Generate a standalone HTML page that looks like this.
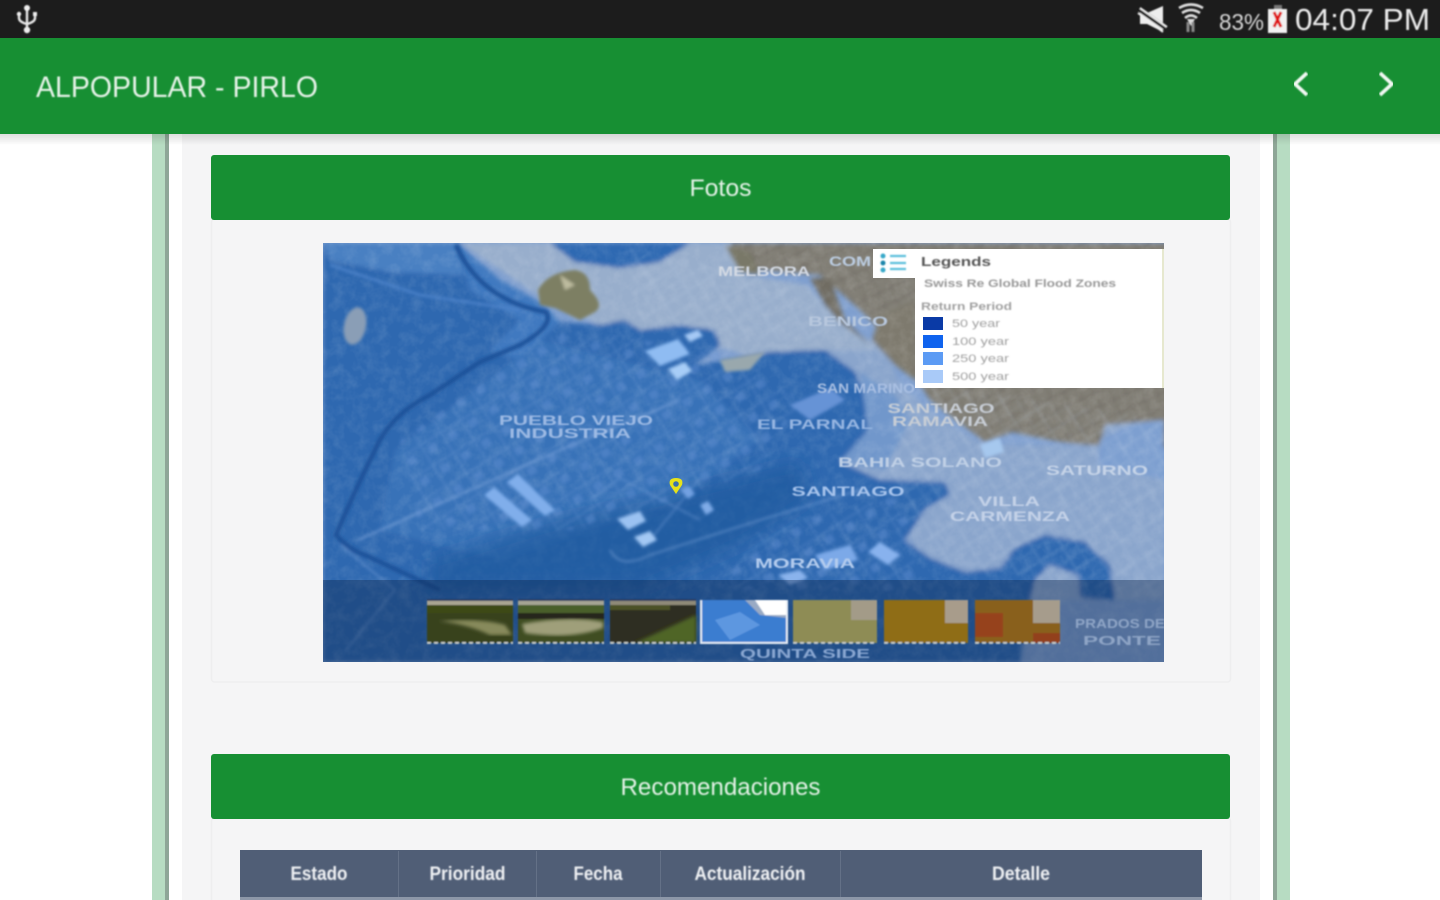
<!DOCTYPE html>
<html lang="es"><head><meta charset="utf-8"><title>ALPOPULAR - PIRLO</title>
<style>
html,body{margin:0;padding:0;width:1440px;height:900px;overflow:hidden;background:#fff}
svg{display:block}
text{font-family:"Liberation Sans",sans-serif}
</style></head><body>
<svg width="1440" height="900" viewBox="0 0 1440 900" xmlns="http://www.w3.org/2000/svg">
<defs>
<filter id="b05" x="-5%" y="-30%" width="110%" height="160%"><feGaussianBlur stdDeviation="0.7"/></filter>
<filter id="b08" x="-5%" y="-5%" width="110%" height="110%"><feGaussianBlur stdDeviation="0.9"/></filter>
<filter id="b1" x="-5%" y="-5%" width="110%" height="110%"><feGaussianBlur stdDeviation="1.6"/></filter>
<filter id="b3" x="-5%" y="-5%" width="110%" height="110%"><feGaussianBlur stdDeviation="2.5"/></filter>
<filter id="b6" x="-20%" y="-20%" width="140%" height="140%"><feGaussianBlur stdDeviation="9"/></filter>
<filter id="noise" x="0" y="0" width="100%" height="100%"><feTurbulence type="fractalNoise" baseFrequency="0.09" numOctaves="3" seed="4"/><feColorMatrix values="0 0 0 0 1  0 0 0 0 1  0 0 0 0 1  1.6 0 0 0 -0.62"/></filter>
<linearGradient id="sh" x1="0" y1="0" x2="0" y2="1"><stop offset="0" stop-color="#000" stop-opacity=".13"/><stop offset="1" stop-color="#000" stop-opacity="0"/></linearGradient>
<clipPath id="mapclip"><rect x="323" y="243" width="841" height="419"/></clipPath>
<pattern id="streets" width="26" height="26" patternUnits="userSpaceOnUse" patternTransform="rotate(-32)"><path d="M0 0H26M0 13H26M0 0V26M13 0V26" stroke="#c4d4ea" stroke-opacity=".24" stroke-width="1.6"/></pattern>
<pattern id="streetsd" width="24" height="24" patternUnits="userSpaceOnUse" patternTransform="rotate(-32)"><path d="M0 0H24M0 0V24" stroke="#86aade" stroke-opacity=".42" stroke-width="2"/><rect x="5" y="5" width="9" height="8" fill="#6b97d6" fill-opacity=".4"/></pattern>
<pattern id="sat" width="14" height="14" patternUnits="userSpaceOnUse" patternTransform="rotate(-25)"><rect width="14" height="14" fill="#86837a"/><path d="M0 0H14M0 7H14M0 0V14" stroke="#625f57" stroke-width="1.6"/></pattern>
</defs>

<!-- page frame -->
<rect width="1440" height="900" fill="#fff"/>
<rect x="152" y="134" width="13" height="766" fill="#b7dcc2"/>
<rect x="165" y="134" width="4" height="766" fill="#8ea697"/>
<rect x="1273" y="134" width="4" height="766" fill="#8ea697"/>
<rect x="1277" y="134" width="13" height="766" fill="#b7dcc2"/>
<rect x="182" y="134" width="1078" height="766" fill="#f5f5f6"/>

<!-- status bar -->
<rect width="1440" height="38" fill="#1c1c1c"/>
<g filter="url(#b05)">
<path d="M27 7V31M19 14V18Q19 22 27 24Q35 22 35 18V14" fill="none" stroke="#e8e8e8" stroke-width="2.4"/>
<circle cx="27" cy="8" r="3" fill="#eee"/><circle cx="27" cy="30" r="3.2" fill="#eee"/><circle cx="19" cy="14" r="2.2" fill="#eee"/><rect x="33" y="12" width="4" height="4" fill="#eee"/>
<path d="M1140 13H1147L1163 6V32L1147 24H1140Z" fill="#eee"/>
<path d="M1139 9L1166 28" stroke="#1c1c1c" stroke-width="5"/><path d="M1140 8L1167 27M1138 13L1163 32" stroke="#eee" stroke-width="2"/>
<path d="M1179 8Q1191 1 1203 8M1182 13Q1191 7 1200 13M1185 18Q1191 13 1197 18" fill="none" stroke="#ddd" stroke-width="2.6"/>
<path d="M1191 26L1187 19H1195Z" fill="#ddd"/>
<path d="M1188 22V32M1193 22V32" stroke="#888" stroke-width="3" fill="none"/>
<text x="1219" y="30" font-size="23" fill="#d8d8d8" textLength="45" lengthAdjust="spacingAndGlyphs">83%</text>
<rect x="1274" y="5" width="8" height="4" fill="#777"/>
<rect x="1268" y="9" width="19" height="24" fill="#f2f2f2"/>
<path d="M1274 12L1281 27M1281 12L1274 27" stroke="#e01818" stroke-width="3"/>
<text x="1295" y="30" font-size="31" fill="#ececec" textLength="135" lengthAdjust="spacingAndGlyphs">04:07 PM</text>
</g>

<!-- toolbar -->
<rect y="134" width="1440" height="11" fill="url(#sh)"/>
<rect y="38" width="1440" height="96" fill="#178f33"/>
<g filter="url(#b05)">
<text x="36" y="97" font-size="30" fill="#e6f3e8" textLength="282" lengthAdjust="spacingAndGlyphs">ALPOPULAR - PIRLO</text>
</g>
<path d="M1307 73L1295 84L1307 95" fill="none" stroke="#f2f8f3" stroke-width="3.6" filter="url(#b05)"/>
<path d="M1380 73L1392 84L1380 95" fill="none" stroke="#f2f8f3" stroke-width="3.6" filter="url(#b05)"/>

<!-- Fotos -->
<rect x="211.500" y="219" width="1019" height="463" rx="3" fill="#f5f5f6" stroke="#eeeeef" stroke-width="1.500"/>
<rect x="211" y="155" width="1019" height="65" rx="3" fill="#178f33"/>
<text x="720.500" y="196" font-size="24" fill="#e4f2e7" text-anchor="middle" textLength="62" lengthAdjust="spacingAndGlyphs" filter="url(#b05)">Fotos</text>

<!-- MAP -->
<g clip-path="url(#mapclip)">
<rect x="323" y="243" width="841" height="419" fill="#7f9fcf"/>
<g filter="url(#b3)">
<!-- satellite, top right -->
<path d="M720 243H1170V450L1110 425L1100 445L1060 442L1010 430L985 440L930 400L895 345L860 310L820 275L760 270Z" fill="url(#sat)"/>
<path d="M915 380H1170V420L1130 425L1098 446L1060 442L1012 432L985 442L945 412Z" fill="url(#sat)"/>
<!-- pale flood layer over top of satellite -->
<path d="M600 243H730L745 275L810 285L830 320L885 345L900 385L935 415L985 445L1035 445L1100 445L1105 425L1164 420V600H860L830 470L860 380L790 340L700 330Z" fill="#8aa5cc"/>
<path d="M460 243H730L745 275L805 285L840 320L880 350L820 350L760 362L730 350L640 330L600 325L545 300Z" fill="#98aecc"/>
<path d="M810 278L830 278L845 320L870 345L840 322L825 305Z" fill="#6f6c62"/>
<path d="M725 245L750 252L760 275L740 272Z" fill="#797868"/>
<path d="M880 315L915 300V380L895 365L872 340Z" fill="#7e7a6e"/>
<!-- main flood layer -->
<path d="M323 243H458L500 280L545 305L560 322L600 325L625 320L640 330L680 325L715 330L720 345L695 365L770 352L825 350L855 372L870 405L868 430L840 462L880 480L945 482L950 495L925 510L905 540L930 558L965 572L1000 568L1015 548L1045 535L1085 542L1110 565L1115 600L1080 598L1078 575L1050 565L1035 580L1030 600L1020 662H323Z" fill="#2e68b0"/>
<path d="M550 243H690L660 262L620 268L575 262Z" fill="#2f69b2"/>
<path d="M1164 420L1130 425L1100 440L1098 465L1164 480Z" fill="#7d9fd0"/>
<path d="M860 372L895 395L910 420L885 470L840 462L868 430Z" fill="#7197cb"/>
<!-- medium band alongside river and mid city tint -->
<path d="M458 243L500 280L545 305L560 322L520 360L490 350L520 320L470 290Z" fill="#3f79c0"/>
<path d="M323 243H455L465 275L390 272L330 260Z" fill="#4a80c2"/>
<path d="M395 450L540 340L700 380L760 440L680 500L500 560L380 530Z" fill="#3d76bb" opacity=".75"/>
</g>
<rect x="323" y="243" width="841" height="419" filter="url(#noise)" opacity=".13"/>
<!-- soft dark swath -->
<path d="M430 560L560 520L650 500L800 462L810 500L740 545L640 590H430Z" fill="#1e589c" opacity=".65" filter="url(#b6)"/>
<g filter="url(#b1)">
<!-- street textures -->
<path d="M400 440L560 330L720 350L800 400L760 470L580 530L420 530Z" fill="url(#streetsd)"/>
<path d="M760 530L905 495L920 590H720Z" fill="url(#streetsd)"/>
<path d="M900 380L1164 420V600L930 560L890 470Z" fill="url(#streets)"/>
<path d="M620 245L830 290L900 400L850 340L740 340L640 320Z" fill="url(#streets)"/>
<!-- dark river -->
<path d="M456 245Q480 300 546 312Q555 325 520 345L480 362L430 395Q390 415 375 450Q355 490 336 535Q350 550 365 555L440 590" fill="none" stroke="#1c5199" stroke-width="4.500"/>
<path d="M358 540L560 450L680 400" fill="none" stroke="#84a8dc" stroke-opacity=".55" stroke-width="2.500"/>
<path d="M650 540L700 478M590 500L620 478L700 520" fill="none" stroke="#7ba3dc" stroke-opacity=".4" stroke-width="2"/>
<path d="M330 265L420 295L520 310" fill="none" stroke="#5288cf" stroke-width="2"/>
<path d="M346 650L395 590L340 545" fill="none" stroke="#6c97d2" stroke-opacity=".6" stroke-width="2"/>
<path d="M610 550Q620 570 650 555L760 520L860 490" fill="none" stroke="#80a5da" stroke-opacity=".5" stroke-width="2"/>
<!-- hills -->
<path d="M538 290Q548 272 575 270Q590 272 590 290Q605 305 595 312L580 320L555 308L540 305Z" fill="#7d7f63"/>
<path d="M560 275L575 285L565 290Z" fill="#bdbb9f"/>
<ellipse cx="355" cy="326" rx="11" ry="19" transform="rotate(12 355 326)" fill="#8a9eb6"/>
<!-- light buildings -->
<path d="M645 351L678 339L690 354L660 366Z" fill="#8fbcf2"/>
<path d="M668 369L685 362L692 371L677 380Z" fill="#a7cdf7"/>
<path d="M684 335L698 330L703 336L690 342Z" fill="#a5c9f5"/>
<path d="M484 495L494 487L532 520L522 527Z" fill="#80aeeb"/>
<path d="M507 482L518 474L555 510L545 516Z" fill="#80aeeb"/>
<path d="M617 519L640 511L646 521L628 530Z" fill="#9bc2f2"/>
<path d="M634 537L650 531L657 540L643 547Z" fill="#a3c8f4"/>
<path d="M681 490L689 486L695 494L688 499Z" fill="#72a1e2"/>
<path d="M700 505L708 501L714 510L706 515Z" fill="#80ace8"/>
<path d="M815 555L850 545L858 560L825 570Z" fill="#7ba9e8"/>
<path d="M868 552L880 542L900 555L888 565Z" fill="#88b2ee"/>
<path d="M778 575L800 570L808 578L790 585Z" fill="#8ab3ec"/>
<path d="M980 445L1000 438L1004 452L985 458Z" fill="#a6c8ee"/>
<path d="M790 405L830 388L845 400L810 420Z" fill="#6693d6"/>
<path d="M720 360L765 352L750 370L725 372Z" fill="#99a8ad"/>
</g>
<!-- labels -->
<g filter="url(#b08)" font-size="14" font-weight="700" fill="#c9d8ee" text-anchor="middle">
<text x="576" y="425" fill="#9dbae4" textLength="154" lengthAdjust="spacingAndGlyphs">PUEBLO VIEJO</text>
<text x="570" y="438" fill="#9dbae4" textLength="122" lengthAdjust="spacingAndGlyphs">INDUSTRIA</text>
<text x="815" y="429" fill="#97b6e2" textLength="116" lengthAdjust="spacingAndGlyphs">EL PARNAL</text>
<text x="920" y="467" fill="#c0d0e6" textLength="164" lengthAdjust="spacingAndGlyphs">BAHIA SOLANO</text>
<text x="848" y="496" fill="#a8c4ec" textLength="113" lengthAdjust="spacingAndGlyphs">SANTIAGO</text>
<text x="1097" y="475" fill="#c6d4e8" textLength="102" lengthAdjust="spacingAndGlyphs">SATURNO</text>
<text x="1009" y="506" fill="#c4d2e8" textLength="62" lengthAdjust="spacingAndGlyphs">VILLA</text>
<text x="1010" y="521" fill="#c4d2e8" textLength="120" lengthAdjust="spacingAndGlyphs">CARMENZA</text>
<text x="805" y="568" fill="#b4ccee" textLength="100" lengthAdjust="spacingAndGlyphs">MORAVIA</text>
<text x="848" y="326" fill="#b8c8de" textLength="80" lengthAdjust="spacingAndGlyphs">BENICO</text>
<text x="866" y="393" fill="#a9bfe2" textLength="98" lengthAdjust="spacingAndGlyphs">SAN MARINO</text>
<text x="941" y="413" fill="#c8ced6" textLength="107" lengthAdjust="spacingAndGlyphs">SANTIAGO</text>
<text x="940" y="426" fill="#c8ced6" textLength="96" lengthAdjust="spacingAndGlyphs">RAMAVIA</text>
<text x="764" y="276" fill="#d4dae4" textLength="92" lengthAdjust="spacingAndGlyphs">MELBORA</text>
<text x="850" y="266" fill="#bccde2" textLength="42" lengthAdjust="spacingAndGlyphs">COM</text>
</g>
<!-- pin -->
<path d="M676 494L670 485Q668 478 676 478Q684 478 682 485Z" fill="#e6e21a"/>
<circle cx="676" cy="484" r="2.800" fill="#3a70b0"/>
<!-- strip -->
<rect x="323" y="580" width="841" height="82" fill="#0b2148" fill-opacity=".38"/>
<g filter="url(#b08)" font-size="13" font-weight="700" text-anchor="middle">
<text x="805" y="658" fill="#8aa7d2" textLength="130" lengthAdjust="spacingAndGlyphs">QUINTA SIDE</text>
<text x="1120" y="628" fill="#8fa5c6" textLength="90" lengthAdjust="spacingAndGlyphs">PRADOS DE</text>
<text x="1122" y="645" fill="#8fa5c6" textLength="78" lengthAdjust="spacingAndGlyphs">PONTE</text>
</g>
<!-- thumbs -->
<g filter="url(#b05)">
<g><rect x="427" y="600" width="86" height="43" fill="#39431e"/><rect x="427" y="600" width="86" height="5" fill="#aaa593"/><rect x="427" y="605" width="86" height="8" fill="#3e4a17"/><path d="M440 621Q480 618 505 625L512 635H490Q470 625 440 621Z" fill="#878a5c" filter="url(#b1)"/></g>
<g><rect x="518" y="600" width="86" height="43" fill="#3f4d22"/><rect x="518" y="600" width="86" height="5" fill="#a6a594"/><rect x="518" y="605" width="86" height="9" fill="#495f2b"/><rect x="518" y="613" width="86" height="6" fill="#26271c"/><path d="M522 624Q570 615 603 622V628Q570 640 525 633Z" fill="#9f9f7a" filter="url(#b1)"/></g>
<g><rect x="610" y="600" width="86" height="43" fill="#2e2e20"/><rect x="610" y="600" width="86" height="5" fill="#8f8a78"/><path d="M635 643L696 615V643Z" fill="#4f6526" filter="url(#b1)"/><rect x="610" y="605" width="60" height="5" fill="#4c5126"/></g>
<g><rect x="701" y="600" width="86" height="43" fill="#3b7dd0"/><path d="M701 600H745L760 615L787 618V600Z" fill="#99aac4"/><path d="M755 600H787V615H765Z" fill="#fff"/><path d="M715 620L740 612L760 625L730 640Z" fill="#5d97e0"/><rect x="700" y="642" width="88" height="2" fill="#e8eef5"/><rect x="700" y="600" width="2" height="43" fill="#e8eef5"/><rect x="786" y="600" width="2" height="43" fill="#e8eef5"/></g>
<g><rect x="793" y="600" width="84" height="43" fill="#8e8c54"/><rect x="851" y="600" width="26" height="20" fill="#a39b88"/></g>
<g><rect x="884" y="600" width="84" height="43" fill="#8f6d17"/><rect x="945" y="600" width="23" height="23" fill="#a89c8b"/></g>
<g><rect x="975" y="600" width="85" height="43" fill="#89611c"/><rect x="975" y="613" width="28" height="24" fill="#96431f"/><rect x="1033" y="600" width="27" height="23" fill="#a69c8c"/><rect x="1033" y="633" width="27" height="10" fill="#923f1a"/></g>
<path d="M427 600H513M518 600H604M610 600H696" stroke="#22305a" stroke-width="1.500"/>
<path d="M427 643H513M518 643H604M610 643H696M793 643H877M884 643H968M975 643H1060" stroke="#c9ccc8" stroke-width="2" stroke-dasharray="4 3"/>
</g>
<!-- legend -->
<g>
<rect x="873" y="249" width="60" height="29" fill="#fff"/>
<rect x="915" y="249" width="249" height="139" fill="#fff"/>
<rect x="1162" y="249" width="2" height="139" fill="#e6e8cf"/>
<g filter="url(#b08)">
<circle cx="883" cy="256" r="2.500" fill="#37a9c9"/><circle cx="883" cy="263" r="2.500" fill="#1a86ab"/><circle cx="883" cy="270" r="2.500" fill="#37a9c9"/>
<path d="M890 256H906M890 263H906M890 269H906" stroke="#5cc0dc" stroke-width="2.200"/>
<text x="921" y="266" font-size="13" fill="#555" textLength="70" lengthAdjust="spacingAndGlyphs" font-weight="700">Legends</text>
<text x="924" y="287" font-size="11" fill="#999" textLength="192" lengthAdjust="spacingAndGlyphs" font-weight="700">Swiss Re Global Flood Zones</text>
<text x="921" y="310" font-size="11" fill="#a0a0a0" textLength="91" lengthAdjust="spacingAndGlyphs" font-weight="700">Return Period</text>
<text x="952" y="327" font-size="11" fill="#a0a0a0" textLength="48" lengthAdjust="spacingAndGlyphs">50 year</text>
<text x="952" y="345" font-size="11" fill="#a0a0a0" textLength="57" lengthAdjust="spacingAndGlyphs">100 year</text>
<text x="952" y="362" font-size="11" fill="#a0a0a0" textLength="57" lengthAdjust="spacingAndGlyphs">250 year</text>
<text x="952" y="380" font-size="11" fill="#a0a0a0" textLength="57" lengthAdjust="spacingAndGlyphs">500 year</text>
</g>
<rect x="923" y="317" width="20" height="13" fill="#0a3aa6"/>
<rect x="923" y="335" width="20" height="13" fill="#0f63ee"/>
<rect x="923" y="352" width="20" height="13" fill="#5c9bf4"/>
<rect x="923" y="370" width="20" height="13" fill="#a9caf8"/>
</g>
</g>

<!-- Recomendaciones -->
<rect x="211.500" y="818" width="1019" height="100" rx="3" fill="#f5f5f6" stroke="#eeeeef" stroke-width="1.500"/>
<rect x="211" y="754" width="1019" height="65" rx="3" fill="#178f33"/>
<text x="720.500" y="795" font-size="24" fill="#e4f2e7" text-anchor="middle" textLength="200" lengthAdjust="spacingAndGlyphs" filter="url(#b05)">Recomendaciones</text>

<!-- table -->
<rect x="240" y="850" width="962" height="50" fill="#505e76"/>
<rect x="240" y="897" width="962" height="3" fill="#8d97a8"/>
<path d="M398.500 851V897M536.500 851V897M660.500 851V897M840.500 851V897" stroke="#647187" stroke-width="1"/>
<g font-size="19" font-weight="700" fill="#eef0f3" text-anchor="middle" filter="url(#b05)">
<text x="319" y="880" textLength="57" lengthAdjust="spacingAndGlyphs">Estado</text>
<text x="467.500" y="880" textLength="76" lengthAdjust="spacingAndGlyphs">Prioridad</text>
<text x="598" y="880" textLength="49" lengthAdjust="spacingAndGlyphs">Fecha</text>
<text x="750" y="880" textLength="111" lengthAdjust="spacingAndGlyphs">Actualización</text>
<text x="1021" y="880" textLength="58" lengthAdjust="spacingAndGlyphs">Detalle</text>
</g>
</svg>
</body></html>
